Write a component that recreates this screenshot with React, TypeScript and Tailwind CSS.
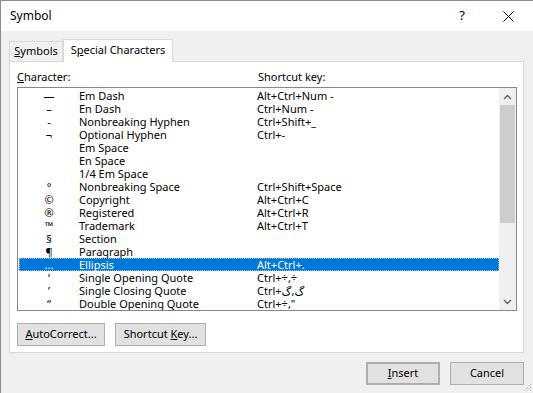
import React from "react";

const rows: [string, string, string][] = [
  ["—", "Em Dash", "Alt+Ctrl+Num -"],
  ["–", "En Dash", "Ctrl+Num -"],
  ["-", "Nonbreaking Hyphen", "Ctrl+Shift+_"],
  ["¬", "Optional Hyphen", "Ctrl+-"],
  ["", "Em Space", ""],
  ["", "En Space", ""],
  ["", "1/4 Em Space", ""],
  ["°", "Nonbreaking Space", "Ctrl+Shift+Space"],
  ["©", "Copyright", "Alt+Ctrl+C"],
  ["®", "Registered", "Alt+Ctrl+R"],
  ["™", "Trademark", "Alt+Ctrl+T"],
  ["§", "Section", ""],
  ["¶", "Paragraph", ""],
  ["...", "Ellipsis", "Alt+Ctrl+."],
  ["‘", "Single Opening Quote", "Ctrl+÷,÷"],
  ["’", "Single Closing Quote", "Ctrl+گ,گ"],
  ["“", "Double Opening Quote", "Ctrl+÷,\""],
];

const SELECTED = 13;

function Btn({ children, className = "" }: { children: React.ReactNode; className?: string }) {
  return (
    <div className={`h-[23px] flex items-center justify-center bg-[#e1e1e1] border border-[#adadad] ${className}`}>
      {children}
    </div>
  );
}

export default function App() {
  return (
    <div
      className="w-[533px] h-[393px] overflow-hidden relative bg-[#f0f0f0] border-l border-t border-[#8c8c8c] text-[11px] text-black"
      style={{ fontFamily: '"Noto Sans", "DejaVu Sans", sans-serif' }}
    >
      {/* title bar */}
      <div className="h-[30px] bg-white flex items-center pl-[9px]">
        <span className="text-[12px]">Symbol</span>
        <span className="ml-auto mr-[38px] text-[13px]">?</span>
        <svg width="11" height="11" viewBox="0 0 11 11" className="mr-[19px]">
          <path d="M0.5 0.5 L10.5 10.5 M10.5 0.5 L0.5 10.5" stroke="#000" strokeWidth="1" />
        </svg>
      </div>

      <div className="pl-[8px] pr-[9px] pt-[8px]">
        {/* tabs */}
        <div className="flex items-end h-[22px] relative z-10">
          <div className="w-[54px] h-[20px] border border-b-0 border-[#d9d9d9] flex items-center justify-center pb-[1px]">
            <span><u>S</u>ymbols</span>
          </div>
          <div className="w-[110px] h-[23px] -mb-[1px] bg-white border border-b-0 border-[#d9d9d9] flex items-center justify-center pb-[2px]">
            <span>S<u>p</u>ecial Characters</span>
          </div>
        </div>

        {/* panel */}
        <div className="h-[292px] bg-white border border-[#d9d9d9] px-[7px] pt-[6px]">
          <div className="flex h-[18px] items-center">
            <span className="w-[241px]"><u>C</u>haracter:</span>
            <span>Shortcut key:</span>
          </div>
          <div className="mt-[1px] h-[224px] w-[500px] border border-[#828790] flex overflow-hidden">
            <div className="flex-1 pt-[1px] pl-[1px]">
              {rows.map(([ch, name, key], i) => (
                <div
                  key={name}
                  className={`h-[13px] leading-[13px] flex items-center ${
                    i === SELECTED ? "bg-[#0078d7] text-white outline outline-1 outline-dotted outline-[#8fbce8] -outline-offset-1" : ""
                  }`}
                >
                  <span className="w-[60px] text-center">{ch}</span>
                  <span className="w-[178px]">{name}</span>
                  <span>{key}</span>
                </div>
              ))}
            </div>
            {/* scrollbar */}
            <div className="w-[17px] bg-[#f0f0f0] flex flex-col">
              <div className="h-[17px] flex items-center justify-center">
                <svg width="9" height="6" viewBox="0 0 9 6">
                  <path d="M1 5 L4.5 1.5 L8 5" stroke="#606060" strokeWidth="1.3" fill="none" />
                </svg>
              </div>
              <div className="mx-[1px] h-[118px] bg-[#cdcdcd]" />
              <div className="flex-1" />
              <div className="h-[17px] flex items-center justify-center">
                <svg width="9" height="6" viewBox="0 0 9 6">
                  <path d="M1 1 L4.5 4.5 L8 1" stroke="#606060" strokeWidth="1.3" fill="none" />
                </svg>
              </div>
            </div>
          </div>

          <div className="flex gap-[10px] mt-[12px]">
            <Btn className="w-[88px]"><span><u>A</u>utoCorrect...</span></Btn>
            <Btn className="w-[91px]"><span>Shortcut <u>K</u>ey...</span></Btn>
          </div>
        </div>

        {/* bottom buttons */}
        <div className="flex justify-end gap-[10px] mt-[9px]">
          <Btn className="w-[74px] border-2 border-[#0078d7]"><span><u>I</u>nsert</span></Btn>
          <Btn className="w-[74px]"><span>Cancel</span></Btn>
        </div>
      </div>

      {/* resize grip */}
      <svg width="10" height="10" viewBox="0 0 10 10" className="absolute right-[1px] bottom-[1px]">
        <path d="M9 2 L2 9 M9 5 L5 9 M9 8 L8 9" stroke="#a0a0a0" strokeWidth="1" strokeDasharray="1 1" />
      </svg>
    </div>
  );
}
